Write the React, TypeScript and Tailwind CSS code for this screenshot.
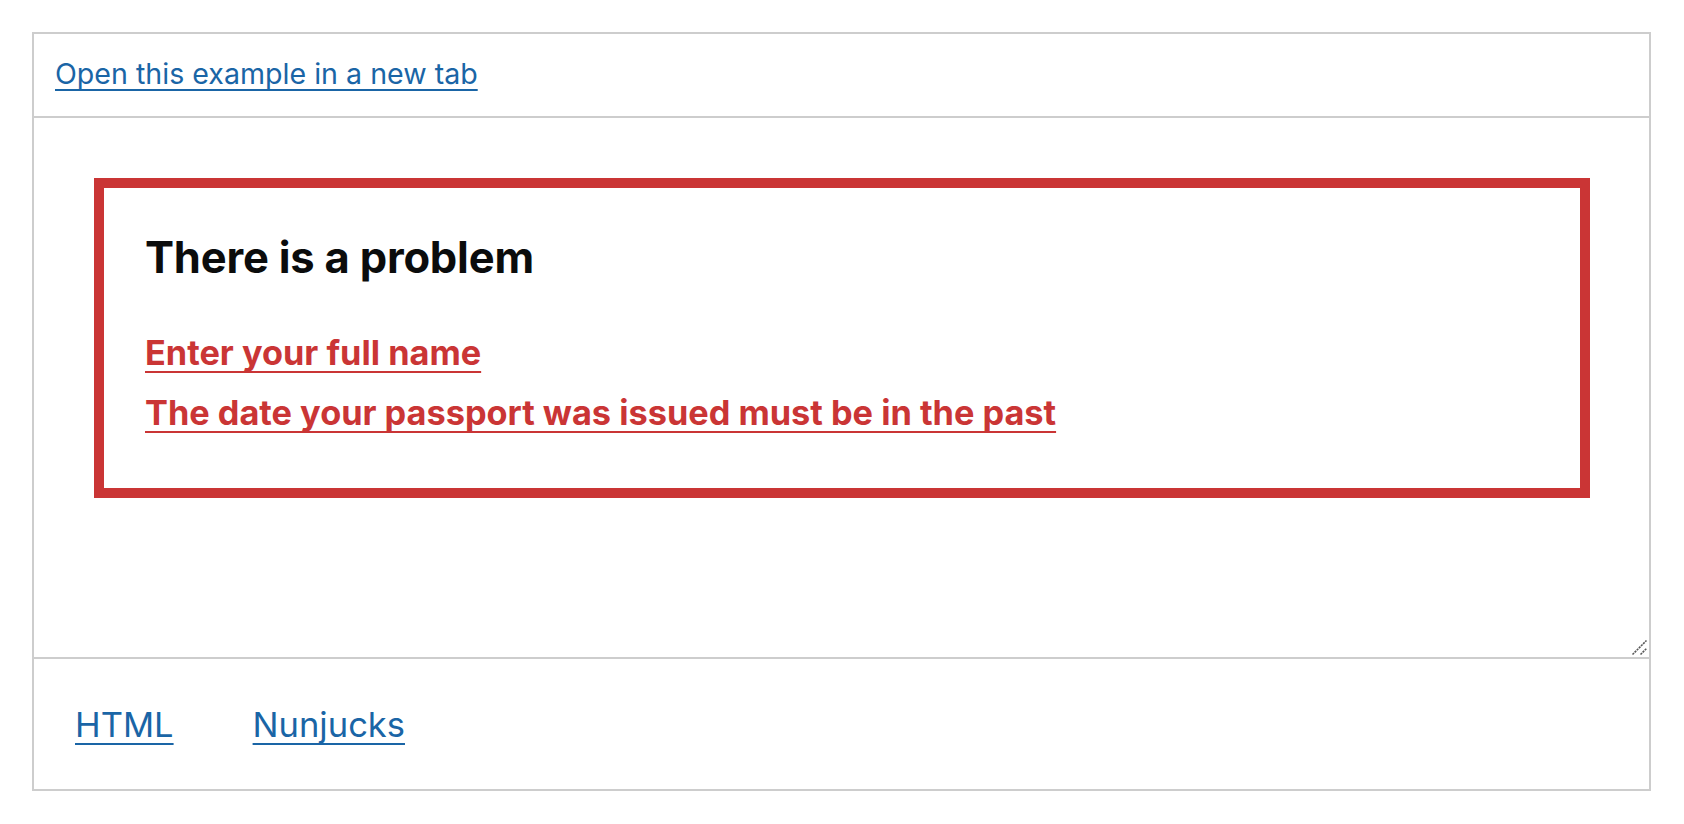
const errors = [
  { href: "#full-name", label: "Enter your full name" },
  { href: "#passport-issued", label: "The date your passport was issued must be in the past" },
];

const tabs = ["HTML", "Nunjucks"];

export default function App() {
  return (
    <div className="min-h-screen bg-white pt-[32px] pl-[32px] pr-[33px] font-['Inter',sans-serif]">
      <div className="flex flex-col border-2 border-[#cdcdcd]">
        {/* open in new tab */}
        <div className="pl-[21px] pt-[22px] pb-[24px] border-b-2 border-[#cdcdcd] text-[28.6px] leading-[36px]">
          <a
            href="#"
            className="text-[#1a65a6] underline decoration-[2px] underline-offset-[5px] [text-decoration-skip-ink:none]"
          >
            Open this example in a new tab
          </a>
        </div>

        {/* example frame */}
        <div className="relative h-[539px] p-[60px] pr-[59px]">
          <div className="border-[10px] border-[#ca3535] px-[41px] pt-[44px] pb-[55px]" role="alert">
            <h2 className="text-[43.5px] leading-[50px] font-bold text-[#0b0c0c] tracking-[-0.2px]">
              There is a problem
            </h2>
            <ul className="mt-[51px] flex flex-col gap-[20px]">
              {errors.map((item) => (
                <li key={item.href} className="text-[34.3px] leading-[40px] font-bold">
                  <a
                    href={item.href}
                    className="text-[#ca3535] underline decoration-[2px] underline-offset-[6px] [text-decoration-skip-ink:none]"
                  >
                    {item.label}
                  </a>
                </li>
              ))}
            </ul>
          </div>
          {/* resize grip */}
          <svg className="absolute right-[1px] bottom-[1px]" width="17" height="17" viewBox="0 0 17 17">
            <path d="M1.5 15.5 L15.5 1.5 M9.5 15.5 L15.5 9.5" stroke="#5a5a5a" strokeWidth="1.6" strokeDasharray="2.2 0.8" />
          </svg>
        </div>

        {/* code tabs */}
        <div className="flex flex-row gap-[79px] border-t-2 border-[#cdcdcd] pl-[41px] pt-[46px] pb-[44px] text-[34.5px] leading-[40px]">
          {tabs.map((tab) => (
            <a
              key={tab}
              href="#"
              className="text-[#1a65a6] underline decoration-[2px] underline-offset-[6px] [text-decoration-skip-ink:none]"
            >
              {tab}
            </a>
          ))}
        </div>
      </div>
    </div>
  );
}
